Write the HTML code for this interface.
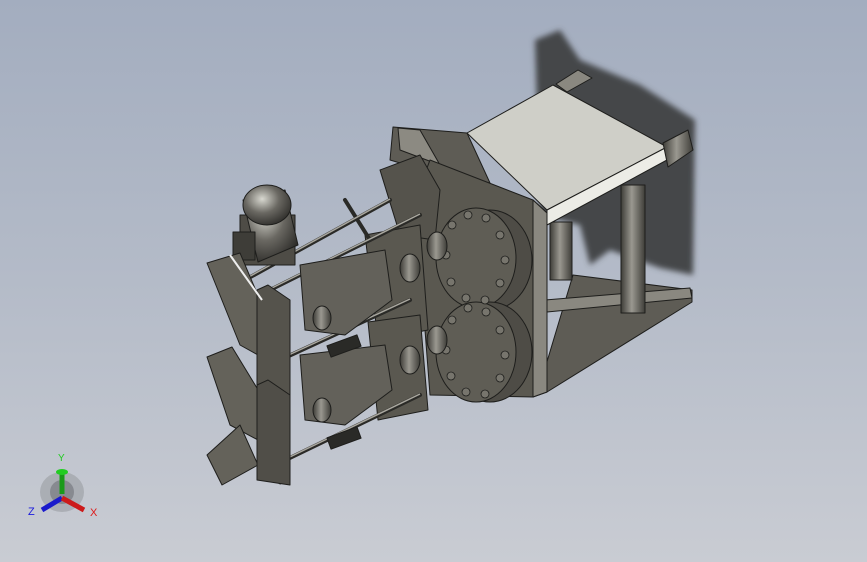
<!DOCTYPE html>
<html><head><meta charset="utf-8"><style>
html,body{margin:0;padding:0}
body{width:867px;height:562px;overflow:hidden;background:linear-gradient(180deg,#a3adbf 0%,#b4bbc8 50%,#c9ccd3 100%);font-family:"Liberation Sans",sans-serif}
svg{position:absolute;left:0;top:0}
</style></head><body>
<svg width="867" height="562" viewBox="0 0 867 562">
<defs>
<filter id="bl"><feGaussianBlur stdDeviation="3"/></filter>
<linearGradient id="cyl" x1="0" x2="1"><stop offset="0" stop-color="#3e3d38"/><stop offset=".45" stop-color="#9a9890"/><stop offset="1" stop-color="#3e3d38"/></linearGradient>
<radialGradient id="mot" cx=".4" cy=".35" r=".7"><stop offset="0" stop-color="#d8d8d0"/><stop offset=".5" stop-color="#6a6862"/><stop offset="1" stop-color="#2e2d2a"/></radialGradient>
</defs>
<g stroke="#1e1e1c" stroke-width="1" stroke-linejoin="round">
<polygon points="535,40 560,30 580,60 640,85 695,120 693,275 660,268 610,250 590,265 580,225 540,215" fill="#45464a" stroke="none" filter="url(#bl)"/>
<polygon points="556,84 578,70 592,78 567,92" fill="#8a8880"/>
<polygon points="573,275 692,290 692,302 547,392 540,385" fill="#5e5c55"/>
<polygon points="545,300 690,288 692,298 547,312" fill="#8a8880"/>
<rect x="550" y="222" width="22" height="58" fill="url(#cyl)"/>
<rect x="621" y="185" width="24" height="128" fill="url(#cyl)"/>
<polygon points="393,127 467,133 490,183 440,175 390,160" fill="#5e5c55"/>
<polygon points="398,128 420,130 440,165 400,150" fill="#8c8a82"/>
<polygon points="467,133 553,85 667,147 547,210" fill="#cfcfc8"/>
<polygon points="547,210 667,147 667,160 547,225" fill="#ecece6"/>
<polygon points="663,143 688,130 693,150 668,167" fill="url(#cyl)"/>
<polygon points="430,160 533,200 547,213 547,392 533,397 430,395 415,200" fill="#5a5850"/>
<polygon points="533,200 547,213 547,392 533,397" fill="#8a8880"/>
<polygon points="380,170 420,155 440,190 435,240 400,235" fill="#55534c"/>
<ellipse cx="490" cy="260" rx="42" ry="50" fill="#4e4c46"/>
<ellipse cx="476" cy="258" rx="40" ry="50" fill="#5f5d55"/>
<ellipse cx="490" cy="352" rx="42" ry="50" fill="#4e4c46"/>
<ellipse cx="476" cy="352" rx="40" ry="50" fill="#5f5d55"/>
<g fill="#77756d" stroke-width=".8">
<circle cx="452" cy="225" r="4"/><circle cx="468" cy="215" r="4"/><circle cx="486" cy="218" r="4"/><circle cx="500" cy="235" r="4"/><circle cx="505" cy="260" r="4"/><circle cx="500" cy="283" r="4"/><circle cx="485" cy="300" r="4"/><circle cx="466" cy="298" r="4"/><circle cx="451" cy="282" r="4"/><circle cx="446" cy="255" r="4"/>
<circle cx="452" cy="320" r="4"/><circle cx="468" cy="308" r="4"/><circle cx="486" cy="312" r="4"/><circle cx="500" cy="330" r="4"/><circle cx="505" cy="355" r="4"/><circle cx="500" cy="378" r="4"/><circle cx="485" cy="394" r="4"/><circle cx="466" cy="392" r="4"/><circle cx="451" cy="376" r="4"/><circle cx="446" cy="350" r="4"/>
</g>
<ellipse cx="437" cy="246" rx="10" ry="14" fill="url(#cyl)"/>
<ellipse cx="437" cy="340" rx="10" ry="14" fill="url(#cyl)"/>
<polygon points="365,235 420,225 428,330 378,340" fill="#5a5850"/>
<polygon points="368,322 420,315 428,410 378,420" fill="#5a5850"/>
<ellipse cx="410" cy="268" rx="10" ry="14" fill="url(#cyl)"/>
<ellipse cx="410" cy="360" rx="10" ry="14" fill="url(#cyl)"/>
<g stroke="#2a2a27" stroke-width="4" stroke-linecap="round">
<line x1="245" y1="280" x2="390" y2="200"/><line x1="270" y1="290" x2="420" y2="215"/>
<line x1="280" y1="360" x2="410" y2="300"/><line x1="265" y1="470" x2="420" y2="395"/>
<line x1="345" y1="200" x2="370" y2="240"/>
</g>
<g stroke="#a8a69e" stroke-width="1.5">
<line x1="245" y1="279" x2="390" y2="199"/><line x1="270" y1="289" x2="420" y2="214"/>
<line x1="280" y1="359" x2="410" y2="299"/><line x1="265" y1="469" x2="420" y2="394"/>
</g>
<rect x="240" y="215" width="55" height="50" fill="#4e4c46"/>
<polygon points="243,200 285,190 298,245 258,262" fill="url(#mot)"/>
<ellipse cx="267" cy="205" rx="24" ry="20" fill="url(#mot)"/>
<rect x="233" y="232" width="22" height="28" fill="#3e3d38"/>
<polygon points="300,265 385,250 392,300 345,335 305,330" fill="#63615a"/>
<polygon points="300,355 385,345 392,390 345,425 305,420" fill="#63615a"/>
<ellipse cx="322" cy="318" rx="9" ry="12" fill="url(#cyl)"/>
<ellipse cx="322" cy="410" rx="9" ry="12" fill="url(#cyl)"/>
<rect x="328" y="340" width="32" height="12" fill="#2a2a27" transform="rotate(-20 344 346)"/>
<rect x="328" y="432" width="32" height="12" fill="#2a2a27" transform="rotate(-20 344 438)"/>
<polygon points="207,263 240,253 262,305 258,355 240,345" fill="#64625a"/>
<polygon points="207,357 232,347 260,393 258,440 230,425" fill="#64625a"/>
<polygon points="207,455 240,425 258,465 222,485" fill="#64625a"/>
<polygon points="257,290 268,285 290,300 290,480 280,484 257,470" fill="#55534c"/>
<polygon points="257,385 268,380 290,395 290,485 257,480" fill="#504e48"/>
<line x1="230" y1="255" x2="262" y2="300" stroke="#eee" stroke-width="2"/>
</g>
<g>
<ellipse cx="62" cy="492" rx="22" ry="20" fill="#9a9ca2" opacity=".6"/>
<ellipse cx="62" cy="492" rx="12" ry="12" fill="#707278" opacity=".6"/>
<line x1="62" y1="494" x2="62" y2="473" stroke="#1a9a1a" stroke-width="5"/>
<ellipse cx="62" cy="472" rx="6" ry="3" fill="#22cc22"/>
<line x1="62" y1="498" x2="42" y2="510" stroke="#1a1acc" stroke-width="5"/>
<line x1="62" y1="498" x2="84" y2="510" stroke="#cc1a1a" stroke-width="5"/>
<text x="58" y="461" font-size="10" fill="#22cc22" font-family="Liberation Sans">Y</text>
<text x="28" y="515" font-size="11" fill="#1a1add" font-family="Liberation Sans">Z</text>
<text x="90" y="516" font-size="11" fill="#dd1a1a" font-family="Liberation Sans">X</text>
</g>
</svg>
</body></html>
